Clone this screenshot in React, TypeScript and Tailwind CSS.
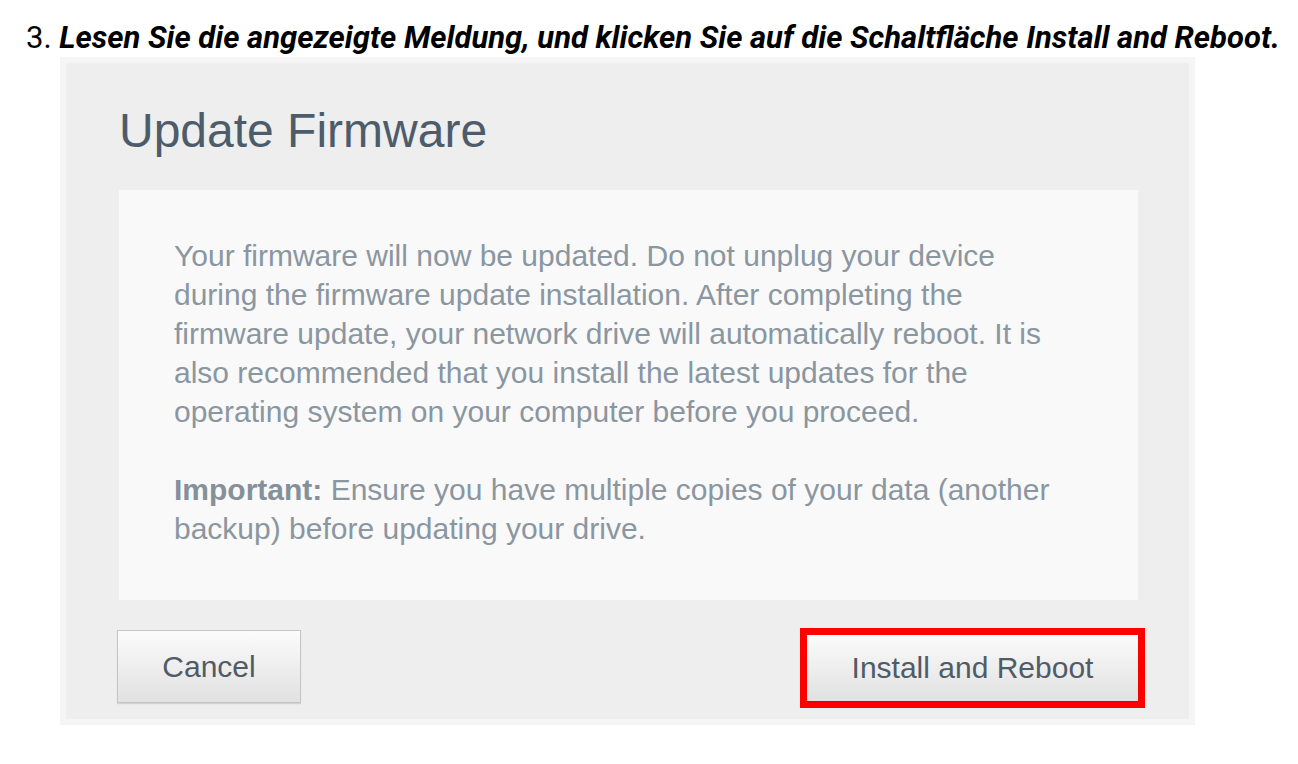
import React from "react";

function DialogButton({ label, className = "" }: { label: string; className?: string }) {
    return (
        <button
            className={`flex items-center justify-center border border-[#c6c6c6] bg-gradient-to-b from-[#fbfbfb] to-[#e1e1e1] text-[30px] leading-none text-[#4f5b66] shadow-[0_1px_1px_rgba(0,0,0,0.12)] ${className}`}
        >
            {label}
        </button>
    );
}

function FirmwareDialog() {
    return (
        <div className="ml-[60px] mt-[2px] h-[668px] w-[1135px] border-[6px] border-[#f5f5f5] bg-[#eeeeee] pl-[53px] pr-[51px] pt-[44px] font-['Liberation_Sans',Arial,sans-serif]">
            <h1 className="mb-[35px] text-[48px] leading-[48px] text-[#4d5c6b]">Update Firmware</h1>

            <div className="h-[410px] bg-[#f9f9f9] pl-[55px] pt-[46px] text-[30px] leading-[39px] text-[#8a96a0]">
                <p>
                    Your firmware will now be updated. Do not unplug your device
                    <br />
                    during the firmware update installation. After completing the
                    <br />
                    firmware update, your network drive will automatically reboot. It is
                    <br />
                    also recommended that you install the latest updates for the
                    <br />
                    operating system on your computer before you proceed.
                </p>
                <p className="mt-[39px]">
                    <span className="font-bold text-[#84909a]">Important:</span> Ensure you have multiple copies of your data (another
                    <br />
                    backup) before updating your drive.
                </p>
            </div>

            <div className="mt-[30px] flex items-start justify-between">
                <DialogButton label="Cancel" className="ml-[-2px] h-[73px] w-[184px]" />
                <div className="mr-[-7px] mt-[-2px] border-[7px] border-[#ff0000]">
                    <DialogButton label="Install and Reboot" className="h-[66px] w-[331px] border-0" />
                </div>
            </div>
        </div>
    );
}

export default function App() {
    return (
        <div className="h-[764px] w-[1298px] bg-white">
            <div className="pl-[26px] pt-[21px] font-['Roboto',sans-serif] text-[31px] leading-[34px] text-black">
                3. <span className="font-bold italic">Lesen Sie die angezeigte Meldung, und klicken Sie auf die Schaltfläche Install and Reboot.</span>
            </div>
            <FirmwareDialog />
        </div>
    );
}
